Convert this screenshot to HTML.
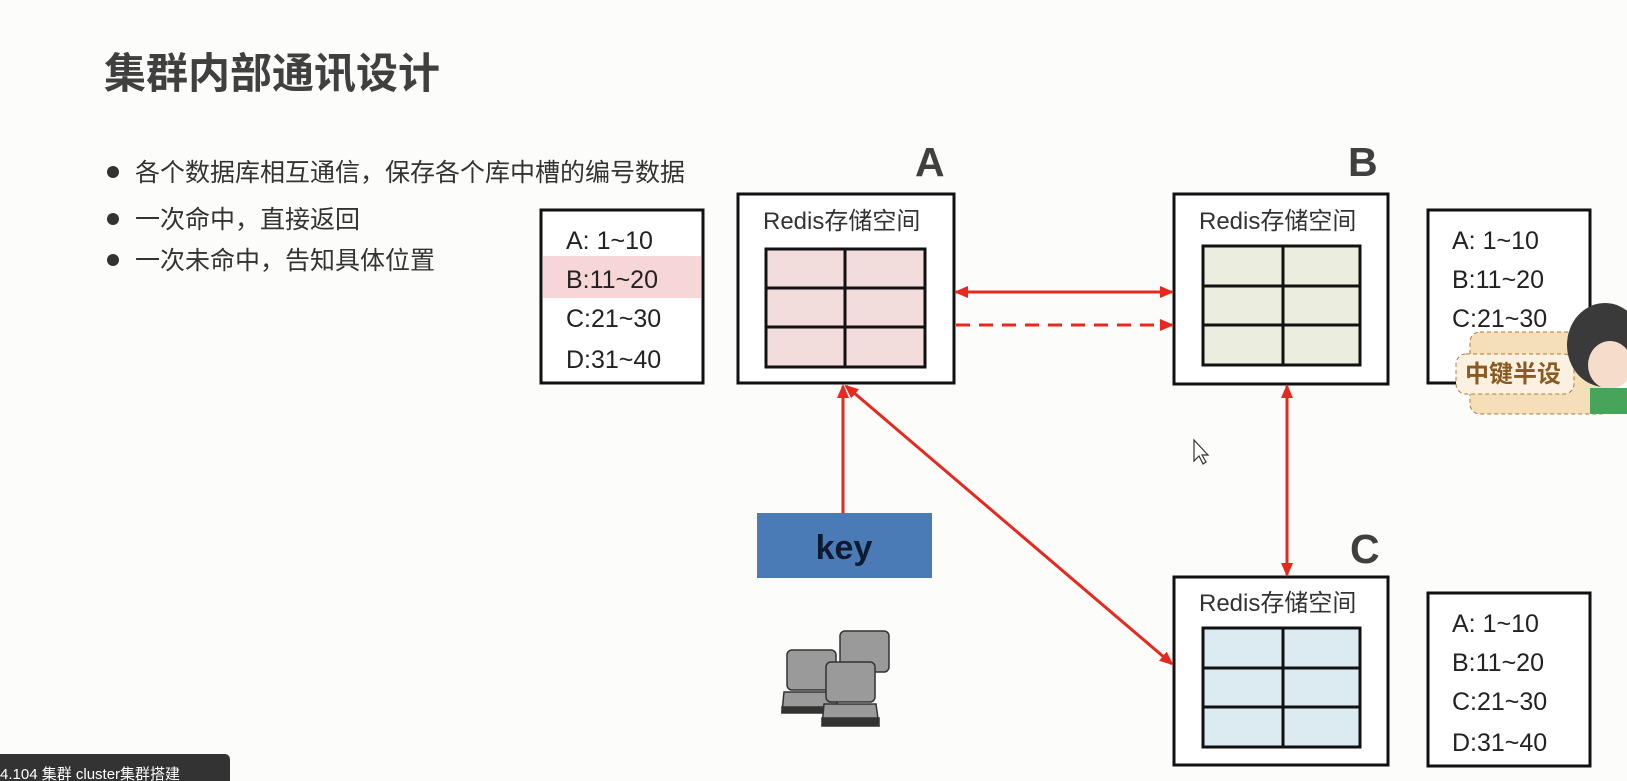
<!DOCTYPE html>
<html><head><meta charset="utf-8"><style>
html,body{margin:0;padding:0;background:#fcfcfa;}
svg{display:block}
text{font-family:"Liberation Sans","Noto Sans CJK SC",sans-serif;}
</style></head><body>
<svg width="1627" height="781" viewBox="0 0 1627 781" xmlns="http://www.w3.org/2000/svg">
<defs>
<marker id="ah" markerWidth="14" markerHeight="12" refX="12" refY="6" orient="auto-start-reverse" markerUnits="userSpaceOnUse"><path d="M0,0 L14,6 L0,12 Z" fill="#e8281e"/></marker>
</defs>
<rect width="1627" height="781" fill="#fcfcfa"/>
<text x="104" y="88" font-size="42" font-weight="bold" fill="#404040">集群内部通讯设计</text>
<g font-size="25" fill="#333">
<circle cx="113" cy="172" r="6" fill="#333"/><text x="135" y="181">各个数据库相互通信，保存各个库中槽的编号数据</text>
<circle cx="113" cy="219" r="6" fill="#333"/><text x="135" y="228">一次命中，直接返回</text>
<circle cx="113" cy="260" r="6" fill="#333"/><text x="135" y="269">一次未命中，告知具体位置</text>
</g>
<g font-size="41" font-weight="bold" fill="#404040">
<text x="915" y="176">A</text><text x="1348" y="176">B</text><text x="1350" y="563">C</text>
</g>
<rect x="541" y="210" width="162" height="173" fill="#fff" stroke="#111" stroke-width="3"/>
<rect x="543" y="256" width="158" height="42" fill="#f6d6d6"/>
<g font-size="25" fill="#222" xml:space="preserve"><text x="566" y="249">A:  1~10</text><text x="566" y="288">B:11~20</text><text x="566" y="327">C:21~30</text><text x="566" y="368">D:31~40</text></g>
<rect x="1428" y="210" width="162" height="173" fill="#fff" stroke="#111" stroke-width="3"/>
<g font-size="25" fill="#222" xml:space="preserve"><text x="1452" y="249">A:  1~10</text><text x="1452" y="288">B:11~20</text><text x="1452" y="327">C:21~30</text></g>
<rect x="1428" y="593" width="162" height="173" fill="#fff" stroke="#111" stroke-width="3"/>
<g font-size="25" fill="#222" xml:space="preserve"><text x="1452" y="632">A:  1~10</text><text x="1452" y="671">B:11~20</text><text x="1452" y="710">C:21~30</text><text x="1452" y="751">D:31~40</text></g>
<g font-size="24" fill="#333">
<rect x="738" y="194" width="216" height="189" fill="#fff" stroke="#111" stroke-width="3"/>
<text x="763" y="229">Redis存储空间</text>
<rect x="1174" y="194" width="214" height="190" fill="#fff" stroke="#111" stroke-width="3"/>
<text x="1199" y="229">Redis存储空间</text>
<rect x="1174" y="577" width="214" height="188" fill="#fff" stroke="#111" stroke-width="3"/>
<text x="1199" y="611">Redis存储空间</text>
</g>
<g stroke="#111" stroke-width="3">
<rect x="766" y="249" width="159" height="118" fill="#f2dcdc"/><line x1="845" y1="249" x2="845" y2="367"/><line x1="766" y1="288" x2="925" y2="288"/><line x1="766" y1="327" x2="925" y2="327"/>
<rect x="1203" y="246" width="157" height="119" fill="#ebeedf"/><line x1="1283" y1="246" x2="1283" y2="365"/><line x1="1203" y1="286" x2="1360" y2="286"/><line x1="1203" y1="325" x2="1360" y2="325"/>
<rect x="1203" y="628" width="157" height="119" fill="#dcebf1"/><line x1="1283" y1="628" x2="1283" y2="747"/><line x1="1203" y1="668" x2="1360" y2="668"/><line x1="1203" y1="707" x2="1360" y2="707"/>
</g>
<g stroke="#e8281e" stroke-width="3" fill="none">
<line x1="956" y1="292" x2="1172" y2="292" marker-start="url(#ah)" marker-end="url(#ah)"/>
<line x1="956" y1="325" x2="1172" y2="325" stroke-dasharray="14,9" marker-end="url(#ah)"/>
<line x1="843" y1="513" x2="843" y2="386" marker-end="url(#ah)"/>
<line x1="846" y1="386" x2="1172" y2="664" marker-start="url(#ah)" marker-end="url(#ah)"/>
<line x1="1287" y1="386" x2="1287" y2="575" marker-start="url(#ah)" marker-end="url(#ah)"/>
</g>
<rect x="757" y="513" width="175" height="65" fill="#4b7bb6"/>
<text x="844" y="559" font-size="34" font-weight="bold" fill="#0d1a30" text-anchor="middle">key</text>
<g stroke="#333" stroke-width="1.5">
<rect x="840" y="631" width="49" height="41" rx="5" fill="#9a9a9a"/>
<rect x="787" y="650" width="49" height="40" rx="5" fill="#9a9a9a"/>
<path d="M784,692 L836,692 L838,712 L782,712 Z" fill="#9a9a9a"/>
<rect x="782" y="707" width="56" height="6" fill="#333"/>
<rect x="826" y="662" width="49" height="40" rx="5" fill="#9a9a9a"/>
<path d="M824,704 L876,704 L879,726 L822,726 Z" fill="#9a9a9a"/>
<rect x="822" y="718" width="57" height="7" fill="#333"/>
</g>
<rect x="1470" y="332" width="140" height="82" rx="10" fill="#f5dfb8" stroke="#b07a40" stroke-dasharray="4,3"/>
<rect x="1456" y="354" width="118" height="40" rx="10" fill="#fbf1e1" stroke="#b07a40" stroke-dasharray="4,3"/>
<text x="1465" y="382" font-size="24" font-weight="bold" fill="#8a5a22" font-family="Noto Sans CJK SC,sans-serif">中键半设</text>
<ellipse cx="1605" cy="345" rx="38" ry="42" fill="#3a3a3a"/>
<ellipse cx="1610" cy="365" rx="22" ry="24" fill="#f5dccb"/>
<rect x="1590" y="388" width="37" height="26" fill="#46a55a"/>
<path d="M1194,440 L1194,461 L1199,456 L1203,464 L1206,462 L1202,455 L1208,455 Z" fill="#fff" stroke="#333" stroke-width="1.2"/>
<rect x="-6" y="754" width="236" height="40" rx="5" fill="#333"/>
<text x="0" y="779" font-size="15" fill="#fff">4.104 集群 cluster集群搭建</text>
</svg>
</body></html>
